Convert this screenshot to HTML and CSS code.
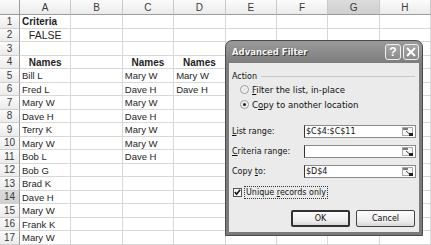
FILE: index.html
```html
<!DOCTYPE html>
<html>
<head>
<meta charset="utf-8">
<link rel="stylesheet" href="styles.css">
</head>
<body>
<div class="sheet">
  <div class="corner"></div>
  <div class="ch">A</div><div class="ch">B</div><div class="ch">C</div><div class="ch">D</div><div class="ch">E</div><div class="ch">F</div><div class="ch sel">G</div><div class="ch">H</div>

  <div class="rh">1</div><div class="c b">Criteria</div><div class="c"></div><div class="c"></div><div class="c"></div><div class="c"></div><div class="c"></div><div class="c"></div><div class="c"></div>
  <div class="rh">2</div><div class="c ctr big">FALSE</div><div class="c"></div><div class="c"></div><div class="c"></div><div class="c"></div><div class="c"></div><div class="c"></div><div class="c"></div>
  <div class="rh">3</div><div class="c"></div><div class="c"></div><div class="c"></div><div class="c"></div><div class="c"></div><div class="c"></div><div class="c"></div><div class="c"></div>
  <div class="rh">4</div><div class="c b ctr">Names</div><div class="c"></div><div class="c b ctr">Names</div><div class="c b ctr">Names</div><div class="c"></div><div class="c"></div><div class="c"></div><div class="c"></div>
  <div class="rh">5</div><div class="c">Bill L</div><div class="c"></div><div class="c">Mary W</div><div class="c">Mary W</div><div class="c"></div><div class="c"></div><div class="c"></div><div class="c"></div>
  <div class="rh">6</div><div class="c">Fred L</div><div class="c"></div><div class="c">Dave H</div><div class="c">Dave H</div><div class="c"></div><div class="c"></div><div class="c"></div><div class="c"></div>
  <div class="rh">7</div><div class="c">Mary W</div><div class="c"></div><div class="c">Mary W</div><div class="c"></div><div class="c"></div><div class="c"></div><div class="c"></div><div class="c"></div>
  <div class="rh">8</div><div class="c">Dave H</div><div class="c"></div><div class="c">Dave H</div><div class="c"></div><div class="c"></div><div class="c"></div><div class="c"></div><div class="c"></div>
  <div class="rh">9</div><div class="c">Terry K</div><div class="c"></div><div class="c">Mary W</div><div class="c"></div><div class="c"></div><div class="c"></div><div class="c"></div><div class="c"></div>
  <div class="rh">10</div><div class="c">Mary W</div><div class="c"></div><div class="c">Mary W</div><div class="c"></div><div class="c"></div><div class="c"></div><div class="c"></div><div class="c"></div>
  <div class="rh">11</div><div class="c">Bob L</div><div class="c"></div><div class="c">Dave H</div><div class="c"></div><div class="c"></div><div class="c"></div><div class="c"></div><div class="c"></div>
  <div class="rh">12</div><div class="c">Bob G</div><div class="c"></div><div class="c"></div><div class="c"></div><div class="c"></div><div class="c"></div><div class="c"></div><div class="c"></div>
  <div class="rh">13</div><div class="c">Brad K</div><div class="c"></div><div class="c"></div><div class="c"></div><div class="c"></div><div class="c"></div><div class="c"></div><div class="c"></div>
  <div class="rh sel">14</div><div class="c">Dave H</div><div class="c"></div><div class="c"></div><div class="c"></div><div class="c"></div><div class="c"></div><div class="c"></div><div class="c"></div>
  <div class="rh">15</div><div class="c">Mary W</div><div class="c"></div><div class="c"></div><div class="c"></div><div class="c"></div><div class="c"></div><div class="c"></div><div class="c"></div>
  <div class="rh">16</div><div class="c">Frank K</div><div class="c"></div><div class="c"></div><div class="c"></div><div class="c"></div><div class="c"></div><div class="c"></div><div class="c"></div>
  <div class="rh">17</div><div class="c">Mary W</div><div class="c"></div><div class="c"></div><div class="c"></div><div class="c"></div><div class="c"></div><div class="c"></div><div class="c"></div>
</div>

<div class="dialog">
  <div class="titlebar">
    <span class="title">Advanced Filter</span>
    <div class="tbtns">
      <span class="tbtn">?</span>
      <span class="tbtn">
        <svg width="12" height="12" viewBox="0 0 12 12"><path d="M2 2 L10 10 M10 2 L2 10" stroke="#fff" stroke-width="2"/></svg>
      </span>
    </div>
  </div>
  <div class="body">
    <div class="group-head"><span>Action</span><span class="rule"></span></div>
    <div class="radio-row"><span class="radio"></span><span><u>F</u>ilter the list, in-place</span></div>
    <div class="radio-row"><span class="radio on"></span><span>C<u>o</u>py to another location</span></div>

    <div class="field first"><span class="lbl"><u>L</u>ist range:</span><span class="inp"><span class="val">$C$4:$C$11</span><svg class="ref" width="12" height="10" viewBox="0 0 12 10"><rect x="0.5" y="0.5" width="10" height="8" fill="#f4f4f4" stroke="#aaa"/><rect x="1" y="1" width="5" height="2" fill="#777"/><path d="M7 6 L11 6 L11 9 L7 9 Z" fill="#222"/><path d="M4 4 L7 6.5" stroke="#444"/></svg></span></div>
    <div class="field"><span class="lbl"><u>C</u>riteria range:</span><span class="inp"><span class="val"></span><svg class="ref" width="12" height="10" viewBox="0 0 12 10"><rect x="0.5" y="0.5" width="10" height="8" fill="#f4f4f4" stroke="#aaa"/><rect x="1" y="1" width="5" height="2" fill="#777"/><path d="M7 6 L11 6 L11 9 L7 9 Z" fill="#222"/><path d="M4 4 L7 6.5" stroke="#444"/></svg></span></div>
    <div class="field"><span class="lbl">Copy <u>t</u>o:</span><span class="inp"><span class="val">$D$4</span><svg class="ref" width="12" height="10" viewBox="0 0 12 10"><rect x="0.5" y="0.5" width="10" height="8" fill="#f4f4f4" stroke="#aaa"/><rect x="1" y="1" width="5" height="2" fill="#777"/><path d="M7 6 L11 6 L11 9 L7 9 Z" fill="#222"/><path d="M4 4 L7 6.5" stroke="#444"/></svg></span></div>

    <div class="check-row">
      <span class="check"><svg width="8" height="8" viewBox="0 0 8 8"><path d="M1 4 L3 6.5 L7 1.5" fill="none" stroke="#111" stroke-width="1.8"/></svg></span>
      <span class="focus">Unique <u>r</u>ecords only</span>
    </div>

    <div class="buttons">
      <span class="btn default">OK</span>
      <span class="btn">Cancel</span>
    </div>
  </div>
</div>
</body>
</html>
```

FILE: styles.css
```css
html, body {
  margin: 0;
  padding: 0;
  background: #fff;
  overflow: hidden;
}

.sheet {
  display: grid;
  grid-template-columns: 20px repeat(8, 51.4px);
  grid-template-rows: 15px repeat(17, 13.5px);
  font-family: "Liberation Sans", Arial, sans-serif;
  font-size: 9.5px;
  color: #1e1e1e;
}

.corner,
.ch,
.rh {
  background: linear-gradient(#fbfbfb, #ebebeb);
  box-sizing: border-box;
  color: #3a3a3a;
  font-size: 10px;
  display: flex;
  align-items: center;
  justify-content: center;
}

.corner {
  border-right: 1px solid #9c9c9c;
  border-bottom: 1px solid #9c9c9c;
}

.ch {
  border-right: 1px solid #c8c8c8;
  border-bottom: 1px solid #9c9c9c;
  padding-top: 1px;
}

.rh {
  border-right: 1px solid #9c9c9c;
  border-bottom: 1px solid #d0d0d0;
}

.ch.sel,
.rh.sel {
  background: linear-gradient(#dcdcdc, #cfcfcf);
}

.c {
  box-sizing: border-box;
  border-right: 1px solid #d8d8d8;
  border-bottom: 1px solid #d8d8d8;
  padding: 1px 2px 0;
  display: flex;
  align-items: center;
  white-space: nowrap;
  overflow: visible;
}

.c.b {
  font-weight: bold;
  font-size: 10px;
}

.c.big {
  font-size: 10.5px;
}

.c.ctr {
  justify-content: center;
}

/* dialog */
.dialog {
  position: absolute;
  left: 225px;
  top: 40px;
  width: 198px;
  height: 196px;
  box-sizing: border-box;
  border: 1px solid #4a4a4a;
  border-radius: 7px 7px 0 0;
  background: linear-gradient(#9a9a9a, #7d7d7d 22px, #7a7a7a);
  padding: 0 3px 3px;
  display: flex;
  flex-direction: column;
  font-family: "DejaVu Sans", Verdana, sans-serif;
  font-size: 8px;
  color: #111;
}

.titlebar {
  height: 22px;
  display: flex;
  align-items: center;
  justify-content: space-between;
  padding: 0 0 0 3px;
}

.title {
  color: #f4f4f4;
  font-weight: bold;
  font-size: 8.5px;
  text-shadow: 1px 1px 0 #333;
}

.tbtns {
  display: flex;
  gap: 2px;
}

.tbtn {
  width: 16px;
  height: 16px;
  box-sizing: border-box;
  border: 1px solid #f0f0f0;
  border-radius: 3px;
  background: linear-gradient(#a8a8a8, #8a8a8a);
  color: #fff;
  font-family: "Liberation Sans", Arial, sans-serif;
  font-weight: bold;
  font-size: 12px;
  display: flex;
  align-items: center;
  justify-content: center;
}

.body {
  flex: 1;
  background: #ebebeb;
  padding: 7px 3px 0 3px;
  display: flex;
  flex-direction: column;
}

.group-head {
  display: flex;
  align-items: center;
  gap: 4px;
  height: 12px;
}

.group-head .rule {
  flex: 1;
  height: 1px;
  background: #c8c8c8;
  margin-right: 1px;
}

.radio-row {
  display: flex;
  align-items: center;
  gap: 3px;
  height: 15px;
  margin-left: 8px;
  font-size: 8.6px;
}

.radio {
  width: 9px;
  height: 9px;
  box-sizing: border-box;
  border-radius: 50%;
  border: 1px solid #9a9a9a;
  background: radial-gradient(#e0e0e0, #fff);
  display: flex;
  align-items: center;
  justify-content: center;
}

.radio.on::after {
  content: "";
  width: 3px;
  height: 3px;
  border-radius: 50%;
  background: #222;
}

.field {
  display: flex;
  align-items: center;
  height: 13px;
  margin-top: 7px;
}

.field.first {
  margin-top: 13px;
}

.lbl {
  width: 72px;
}

.inp {
  width: 112px;
  height: 13px;
  box-sizing: border-box;
  background: #fff;
  border: 1px solid #8a8a8a;
  border-left-color: #333;
  display: flex;
  align-items: center;
  justify-content: space-between;
  padding: 0 1px 0 1px;
}

.ref {
  display: block;
}

.check-row {
  display: flex;
  align-items: center;
  gap: 3px;
  height: 12px;
  margin-top: 8px;
  margin-left: 1px;
}

.check {
  width: 9px;
  height: 9px;
  box-sizing: border-box;
  border: 1px solid #555;
  background: #fff;
  display: flex;
  align-items: center;
  justify-content: center;
}

.focus {
  outline: 1px dotted #333;
  padding: 0 1px;
  line-height: 11px;
}

.buttons {
  display: flex;
  justify-content: flex-end;
  gap: 6px;
  margin-top: 12px;
  padding-right: 1px;
}

.btn {
  width: 59px;
  height: 17px;
  box-sizing: border-box;
  border: 1px solid #444;
  border-radius: 2px;
  background: linear-gradient(#fdfdfd, #ececec 70%, #d8d8d8);
  display: flex;
  align-items: center;
  justify-content: center;
}

.btn.default {
  border: 2px solid #333;
}
```
